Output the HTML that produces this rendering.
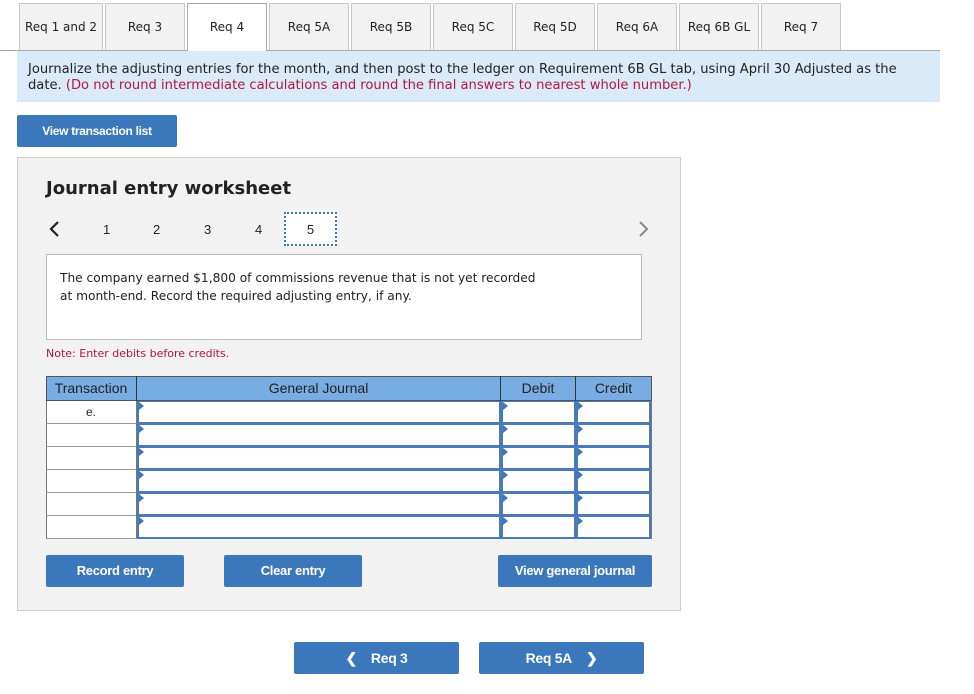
<!DOCTYPE html>
<html><head><meta charset="utf-8"><style>
*{box-sizing:border-box;margin:0;padding:0}
body{width:974px;height:694px;background:#fff;position:relative;font-family:"DejaVu Sans","Liberation Sans",sans-serif;color:#222;overflow:hidden}
.a{position:absolute}
.tab{position:absolute;top:3px;height:47px;width:80px;background:#f2f2f2;border:1px solid #c8c8c8;border-bottom:none;font-size:12px;text-align:center;line-height:47px;color:#222}
.tab.on{background:#fff;border-color:#aaa;height:48px;z-index:2}
.btn{position:absolute;background:#3b77bb;color:#fff;font-family:"Liberation Sans",Arial,sans-serif;font-weight:bold;font-size:13px;text-align:center;border-radius:2px;letter-spacing:-0.3px}
.cell{position:absolute;background:#fff;border:2px solid #4a7ab8;border-top-width:1px}
.tri{position:absolute;left:0;top:0;width:0;height:0;border-left:5px solid #3b77bb;border-top:4px solid transparent;border-bottom:4px solid transparent}
.pg{position:absolute;top:222px;font-family:"Liberation Sans",Arial,sans-serif;font-size:13px;color:#222}
.th{position:absolute;top:376px;height:25px;line-height:25px;text-align:center;font-family:'Liberation Sans',Arial,sans-serif;font-size:14px;color:#222}
</style></head><body>
<div class="tab" style="left:19px;width:84px">Req 1 and 2</div>
<div class="tab" style="left:105px">Req 3</div>
<div class="tab on" style="left:187px">Req 4</div>
<div class="tab" style="left:269px">Req 5A</div>
<div class="tab" style="left:351px">Req 5B</div>
<div class="tab" style="left:433px">Req 5C</div>
<div class="tab" style="left:515px">Req 5D</div>
<div class="tab" style="left:597px">Req 6A</div>
<div class="tab" style="left:679px">Req 6B GL</div>
<div class="tab" style="left:761px">Req 7</div>
<div class="a" style="left:0;top:50px;width:940px;height:1px;background:#aaa"></div>
<div class="a" style="left:17px;top:51px;width:923px;height:51px;background:#dbeaf8;font-size:13.1px;line-height:16px;padding:11px 0 0 11px;color:#222;white-space:nowrap">Journalize the adjusting entries for the month, and then post to the ledger on Requirement 6B GL tab, using April 30 Adjusted as the<br>date. <span style="color:#b0183c">(Do not round intermediate calculations and round the final answers to nearest whole number.)</span></div>
<div class="btn" style="left:17px;top:115px;width:160px;height:32px;line-height:32px;font-size:12px">View transaction list</div>
<div class="a" style="left:17px;top:157px;width:664px;height:454px;background:#f2f2f2;border:1px solid #ccc"></div>
<div class="a" style="left:46px;top:178px;font-size:18px;font-weight:bold;color:#222">Journal entry worksheet</div>
<svg class="a" style="left:47px;top:220px" width="14" height="18"><path d="M11 2 L4 9 L11 16" stroke="#222" stroke-width="2.2" fill="none"/></svg>
<div class="pg" style="left:103px">1</div>
<div class="pg" style="left:153px">2</div>
<div class="pg" style="left:204px">3</div>
<div class="pg" style="left:255px">4</div>
<div class="a" style="left:284px;top:212px;width:53px;height:34px;background:#fff;border:2px dotted #3b77bb;font-family:'Liberation Sans',Arial,sans-serif;font-size:13px;text-align:center;line-height:31px">5</div>
<svg class="a" style="left:637px;top:220px" width="14" height="18"><path d="M3 2 L10 9 L3 16" stroke="#888" stroke-width="2" fill="none"/></svg>
<div class="a" style="left:46px;top:254px;width:596px;height:86px;background:#fff;border:1px solid #bbb;font-size:12.2px;line-height:18px;padding:14px 0 0 13px;color:#222">The company earned $1,800 of commissions revenue that is not yet recorded<br>at month-end. Record the required adjusting entry, if any.</div>
<div class="a" style="left:46px;top:347px;font-size:11px;color:#b0183c">Note: Enter debits before credits.</div>
<div class="a" style="left:46px;top:376px;width:606px;height:163px;background:#fff;border:1px solid #777"></div>
<div class="a" style="left:46px;top:376px;width:606px;height:25px;background:#77ade3;border:1px solid #555"></div>
<div class="th" style="left:46px;width:91px;border-right:1px solid #333">Transaction</div>
<div class="th" style="left:137px;width:364px;border-right:1px solid #333">General Journal</div>
<div class="th" style="left:501px;width:75px;border-right:1px solid #333">Debit</div>
<div class="th" style="left:576px;width:75px">Credit</div>
<div class="a" style="left:86px;top:405px;font-family:'Liberation Sans',Arial,sans-serif;font-size:12px">e.</div>
<div id="rows"></div>
<script>
var h='';for(var i=0;i<6;i++){var y=401+i*23;
h+='<div class="a" style="left:46px;top:'+(y+22)+'px;width:91px;height:1px;background:#999"></div>';
[[137,364],[501,75],[576,75]].forEach(function(c){h+='<div class="cell" style="left:'+c[0]+'px;top:'+y+'px;width:'+c[1]+'px;height:23px"><div class="tri"></div></div>';});}
h+='<div class="a" style="left:136px;top:401px;width:1px;height:137px;background:#777"></div>';
document.getElementById('rows').innerHTML=h;
</script>
<div class="btn" style="left:46px;top:555px;width:138px;height:32px;line-height:32px">Record entry</div>
<div class="btn" style="left:224px;top:555px;width:138px;height:32px;line-height:32px">Clear entry</div>
<div class="btn" style="left:498px;top:555px;width:154px;height:32px;line-height:32px">View general journal</div>
<div class="btn" style="left:294px;top:642px;width:165px;height:32px;line-height:32px;font-size:14px"><span style="margin-right:14px">&#10094;</span>Req 3</div>
<div class="btn" style="left:479px;top:642px;width:165px;height:32px;line-height:32px;font-size:14px">Req 5A<span style="margin-left:14px">&#10095;</span></div>
</body></html>
